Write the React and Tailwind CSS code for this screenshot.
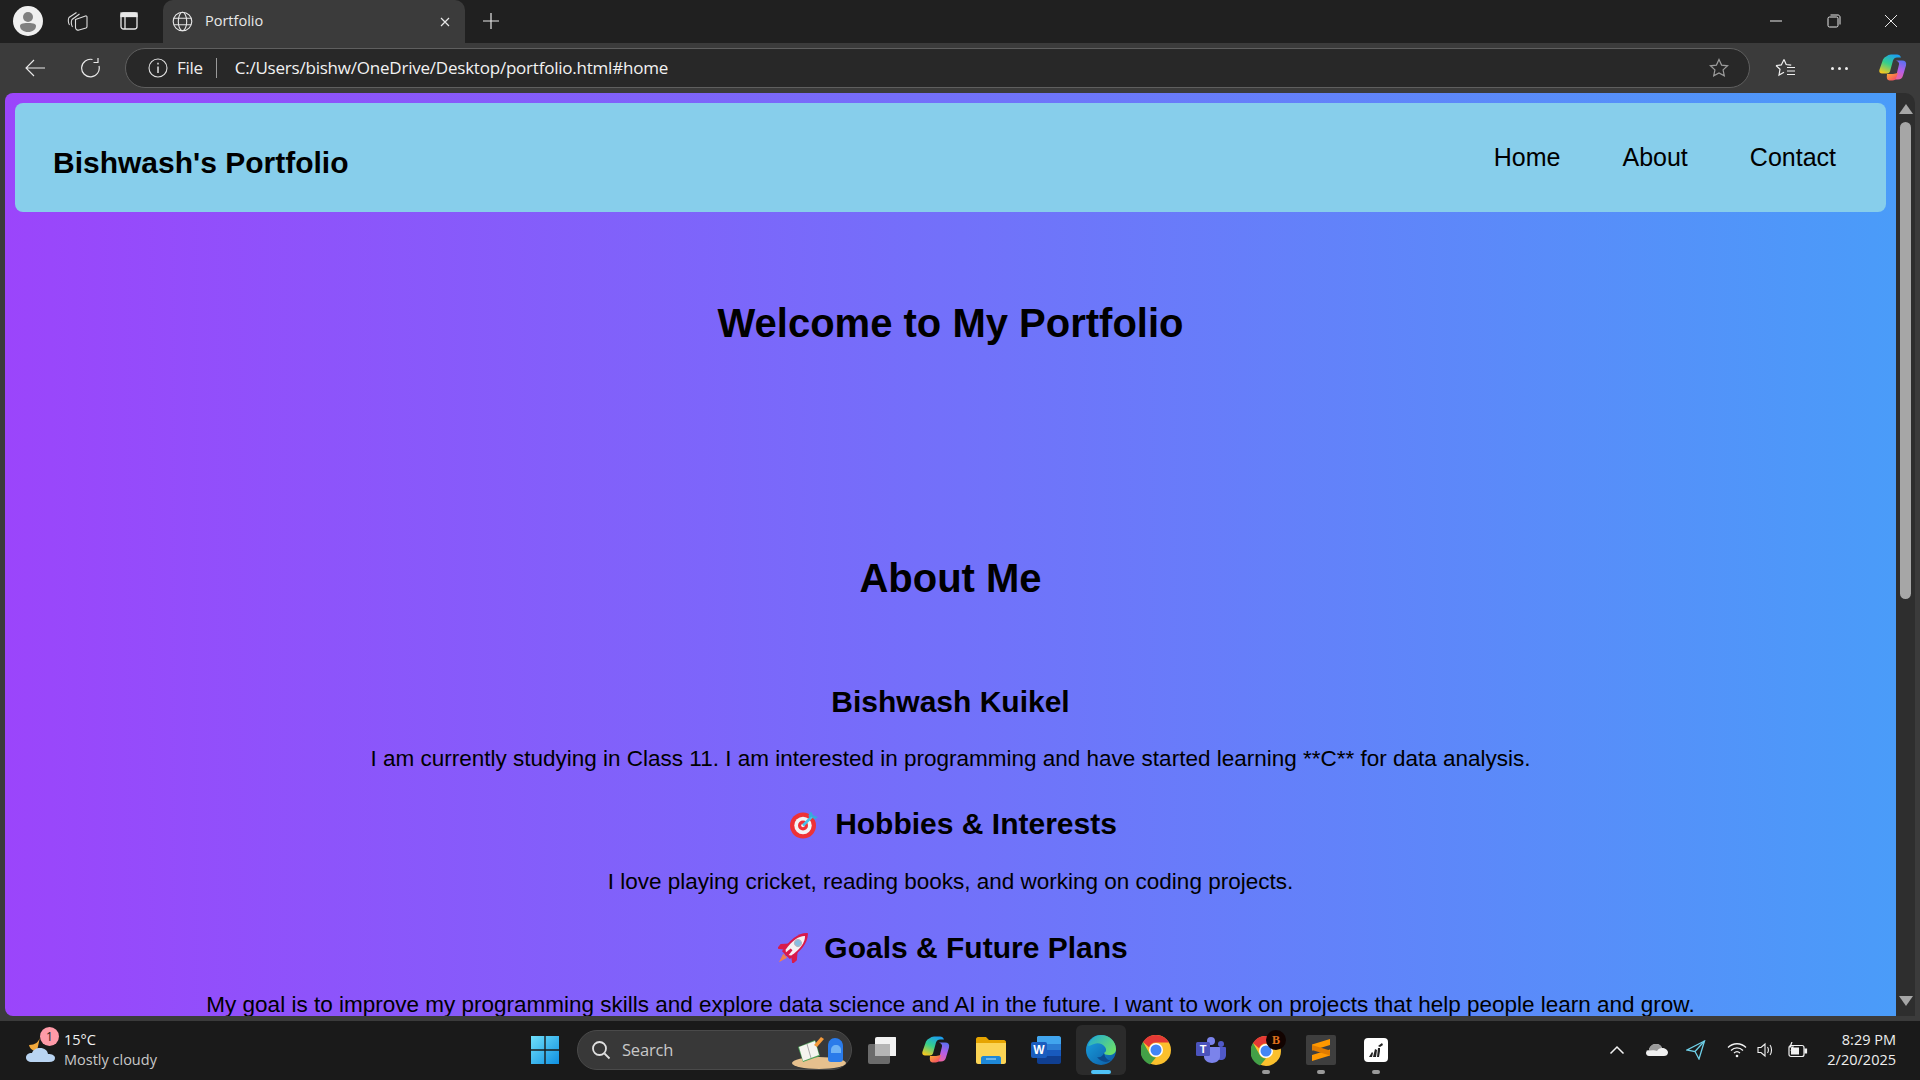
import React from "react";

const ui = { fontFamily: '"Open Sans","Noto Sans",sans-serif' };

function Copilot({ s = 28, id = "cp" }) {
  return (
    <svg width={s} height={s} viewBox="0 0 28 27">
      <defs>
        <linearGradient id={id + "a"} x1="0.7" y1="0" x2="0.2" y2="1"><stop offset="0" stopColor="#1c9ff0" /><stop offset="0.5" stopColor="#35cf8c" /><stop offset="1" stopColor="#f7c81e" /></linearGradient>
        <linearGradient id={id + "b"} x1="0.6" y1="0" x2="0.3" y2="1"><stop offset="0" stopColor="#5f6ff0" /><stop offset="0.5" stopColor="#b45ee6" /><stop offset="1" stopColor="#f0639c" /></linearGradient>
        <linearGradient id={id + "c"} x1="0" y1="0" x2="1" y2="1"><stop offset="0" stopColor="#ffb02e" /><stop offset="1" stopColor="#f03a6e" /></linearGradient>
      </defs>
      <path d="M8 1.500Q9 0 12 0h6q3 0 4 3h-4q-3 0-4 3l-3 11q-.6 2-3 2H3q-3.500 0-2.500-4L4 5q1-2.500 4-3.500z" fill={`url(#${id}a)`} />
      <path d="M17 6h6q5 0 4 5l-3 10q-1 4-5 4h-5q2 0 3-3l3-12q.5-2.500-3-4z" fill={`url(#${id}b)`} />
      <path d="M8 19.500h6l5-1-1.500 4q-1 3.500-4 3.500h-3q-3.500 0-2.500-6.500z" fill={`url(#${id}c)`} />
    </svg>
  );
}

function Globe() {
  return (
    <svg width="21" height="21" viewBox="0 0 21 21" fill="none" stroke="#e6e6e6" strokeWidth="1.100">
      <circle cx="10.500" cy="10.500" r="9.300" /><ellipse cx="10.500" cy="10.500" rx="4.200" ry="9.300" />
      <path d="M2 7.300h17M2 13.700h17" />
    </svg>
  );
}

function TopBar() {
  return (
    <div className="flex h-[43px] items-center bg-[#202020] pb-[1px] text-white">
      <div className="ml-[13px] flex h-[30px] w-[30px] items-center justify-center overflow-hidden rounded-full bg-[#f0f0f0]">
        <svg width="30" height="30" viewBox="0 0 30 30"><circle cx="15" cy="11" r="5" fill="#808080" /><path d="M7 20c0-2 2-3 8-3s8 1 8 3c0 3.500-3.500 6-8 6s-8-2.500-8-6z" fill="#808080" /></svg>
      </div>
      <svg className="ml-[24px]" width="21" height="20" viewBox="0 0 21 20" fill="none" stroke="#dcdcdc" strokeWidth="1.100">
        <path d="M2.500 14C1 12 1 8 2 6.500L9.500 1.500" /><path d="M5.500 16C4 14 4 10 5 8.500L12.500 3" />
        <path d="M8.500 8.500l10-3.500c.8-.3 1.500.2 1.500 1v9.500c0 .8-.3 1.200-1 1.500L12 19c-1.500.5-3.500-.5-3.500-2.500z" />
      </svg>
      <svg className="ml-[32px]" width="18" height="18" viewBox="0 0 18 18" fill="none" stroke="#e8e8e8" strokeWidth="1.300">
        <rect x="1" y="1" width="16" height="16" rx="2.500" /><rect x="1" y="1" width="16" height="3.500" fill="#e8e8e8" /><path d="M5 4.500V17" />
      </svg>
      <div className="ml-[25px] flex h-[43px] w-[302px] items-center self-start rounded-t-[10px] bg-[#3b3b3b] pr-[14px] pb-[1px] pl-[9px]">
        <Globe />
        <span className="ml-[12px] text-[14.5px] text-[#e8e8e8]" style={ui}>Portfolio</span>
        <svg className="mt-[1px] ml-auto" width="12" height="12" viewBox="0 0 12 12" stroke="#e8e8e8" strokeWidth="1.200"><path d="M2 2l8 8M10 2l-8 8" /></svg>
      </div>
      <svg className="ml-[17px]" width="18" height="18" viewBox="0 0 18 18" stroke="#e8e8e8" strokeWidth="1.200"><path d="M9 1v16M1 9h16" /></svg>
      <svg className="ml-auto" width="14" height="14" viewBox="0 0 14 14" stroke="#e8e8e8" strokeWidth="1"><path d="M1 7h12" /></svg>
      <svg className="ml-[44px]" width="14" height="14" viewBox="0 0 14 14" fill="none" stroke="#e8e8e8" strokeWidth="1"><rect x="1" y="3" width="10" height="10" rx="1.500" /><path d="M3.500 1h7.500c1 0 2 1 2 2v7.500" /></svg>
      <svg className="mr-[22px] ml-[43px]" width="14" height="14" viewBox="0 0 14 14" stroke="#e8e8e8" strokeWidth="1"><path d="M1 1l12 12M13 1L1 13" /></svg>
    </div>
  );
}

function Toolbar() {
  return (
    <div className="flex h-[50px] items-center bg-[#3b3b3b] text-white">
      <svg className="ml-[25px]" width="20" height="18" viewBox="0 0 20 18" fill="none" stroke="#eaeaea" strokeWidth="1.100"><path d="M20 9H1M9 1L1 9l8 8" /></svg>
      <svg className="ml-[35px]" width="20" height="20" viewBox="0 0 20 20" fill="none" stroke="#eaeaea" strokeWidth="1.200"><path d="M12.500 1.500A8.800 8.800 0 1 0 19 8" /><path d="M18 0V4.500h-4.500" /></svg>
      <div className="ml-[25px] flex h-[40px] w-[1625px] items-center rounded-[20px] border border-[#5f5f5f] bg-[#282828] pr-[20px] pl-[22px]">
        <svg width="20" height="20" viewBox="0 0 20 20" fill="none" stroke="#e0e0e0" strokeWidth="1.100"><circle cx="10" cy="10" r="9" /><path d="M10 8.500v6.500M10 4.700v1.800" strokeWidth="1.500" /></svg>
        <span className="ml-[9px] text-[17px] tracking-[-0.3px] text-[#eeeeee]" style={ui}>File</span>
        <span className="ml-[13px] h-[20px] w-px bg-[#9a9a9a]" />
        <span className="ml-[18px] text-[17px] tracking-[-0.22px] text-[#f2f2f2]" style={ui}>C:/Users/bishw/OneDrive/Desktop/portfolio.html#home</span>
        <svg className="ml-auto" width="20" height="20" viewBox="0 0 20 20" fill="none" stroke="#9c9c9c" strokeWidth="1.200"><path d="M10 1.500l2.600 5.600 6 .7-4.500 4.100 1.200 6L10 15l-5.300 2.900 1.200-6L1.400 7.800l6-.7z" /></svg>
      </div>
      <svg className="ml-[25px]" width="22" height="20" viewBox="0 0 22 20" fill="none" stroke="#f0f0f0" strokeWidth="1.200"><path d="M9 1.500l2.200 5 5 .6M1 7.500l5.300-.6L9 1.500M1 7.500l4 3.800-1 5.700 5-2.800" /><path d="M12 9.500h8M12 13h8M12 16.500h8" /></svg>
      <div className="ml-[34px] flex gap-[4px]">
        <span className="h-[3px] w-[3px] rounded-full bg-[#eeeeee]" /><span className="h-[3px] w-[3px] rounded-full bg-[#eeeeee]" /><span className="h-[3px] w-[3px] rounded-full bg-[#eeeeee]" />
      </div>
      <div className="ml-[31px]"><Copilot s={28} id="cpt" /></div>
    </div>
  );
}

function Dart() {
  return (
    <svg width="30" height="30" viewBox="0 0 30 30">
      <circle cx="14" cy="16.500" r="13" fill="#ee3236" /><circle cx="14" cy="16.500" r="8.700" fill="#f4f4f4" /><circle cx="14" cy="16.500" r="5" fill="#ee3236" /><circle cx="14" cy="16.500" r="1.800" fill="#f4f4f4" />
      <path d="M14 16.500L24 6.500" stroke="#46c3ea" strokeWidth="2.600" />
      <path d="M21 3l3.500 3.500L29 8l-3.500 2.500-3-3z M21 3l2 .5.500 3-3 3-1-3z" fill="#39a7dc" />
    </svg>
  );
}

function Rocket() {
  return (
    <svg width="30" height="30" viewBox="0 0 30 30">
      <g transform="rotate(45 15 15)">
        <path d="M12.300 26h5.400L15 35z" fill="#f4804c" />
        <path d="M9.500 14L3.500 21l.5 6 6.500-5zM20.500 14l6 7-.5 6-6.500-5z" fill="#d81b4b" />
        <path d="M15-6C22 0 23 12 20.500 25h-11C7 12 8 0 15-6z" fill="#d81b4b" />
        <path d="M15-2c4.500 4 6 13 4 23.500l-4 3-4-3C9 11 10.500 2 15-2z" fill="#f6f2f4" />
        <path d="M13.700 17h2.600l.7 7.500-2 1-2-1z" fill="#d81b4b" />
        <circle cx="15" cy="8" r="3.400" fill="#89bde0" stroke="#b5b5c0" strokeWidth="1" />
      </g>
    </svg>
  );
}

function Page() {
  return (
    <div className="flex h-[923px] bg-[#3b3b3b] pl-[5px] pr-[5px]">
      <div className="h-[923px] w-[1891px] overflow-hidden rounded-l-[8px] bg-[linear-gradient(to_right,#9b45fb,#4a9cf9)] pt-[10px] text-center text-black" style={{ fontFamily: '"Liberation Sans",Arial,sans-serif' }}>
        <div className="mx-[10px] flex h-[109px] justify-between rounded-[8px] bg-[#87ceeb] pr-[50px] pl-[38px]">
          <div className="pt-[43px] text-[30px] leading-[34px] font-bold">Bishwash's Portfolio</div>
          <div className="flex gap-[62px] pt-[39px] text-[25px] leading-[30px]">
            <span>Home</span><span>About</span><span>Contact</span>
          </div>
        </div>
        <h1 className="mt-[88px] text-[40px] leading-[46px] font-bold">Welcome to My Portfolio</h1>
        <h2 className="mt-[209px] text-[40px] leading-[46px] font-bold">About Me</h2>
        <h3 className="mt-[84px] text-[30px] leading-[34px] font-bold">Bishwash Kuikel</h3>
        <p className="mt-[27px] text-[22.5px] leading-[26px]">I am currently studying in Class 11. I am interested in programming and have started learning **C** for data analysis.</p>
        <h3 className="mt-[35px] flex items-center justify-center gap-[16px] pl-[5px] text-[30px] leading-[34px] font-bold"><Dart />Hobbies &amp; Interests</h3>
        <p className="mt-[28px] text-[22.5px] leading-[26px]">I love playing cricket, reading books, and working on coding projects.</p>
        <h3 className="mt-[36px] flex items-center justify-center gap-[16px] pl-[5px] text-[30px] leading-[34px] font-bold"><Rocket />Goals &amp; Future Plans</h3>
        <p className="mt-[27px] text-[22.5px] leading-[26px]">My goal is to improve my programming skills and explore data science and AI in the future. I want to work on projects that help people learn and grow.</p>
      </div>
      <div className="flex h-[923px] w-[19px] flex-col items-center rounded-tr-[10px] bg-[#2e2e2e] pt-[11px]">
        <div className="h-0 w-0 border-x-[7px] border-b-[10px] border-x-transparent border-b-[#a6a6a6]" />
        <div className="mt-[8px] h-[477px] w-[11px] rounded-full bg-[#a6a6a6]" />
        <div className="mt-auto mb-[10px] h-0 w-0 border-x-[7px] border-t-[10px] border-x-transparent border-t-[#a6a6a6]" />
      </div>
    </div>
  );
}

function Weather() {
  return (
    <div className="relative flex h-[59px] w-[560px] items-center pl-[25px]">
      <svg width="32" height="32" viewBox="0 0 32 32">
        <path d="M15 3c-1 5-5 8-11 8 1 4 4 6 8 6z" fill="#f2a93b" />
        <path d="M7 28c-4 0-6-2-6-4.500S3 19 7 19c1-3 4-5 8-5 4.500 0 7.500 2.500 8 6 4 0 7 1.500 7 4s-2 4-6 4z" fill="#b9d4f2" />
      </svg>
      <span className="absolute top-[7px] left-[40px] flex h-[19px] w-[19px] items-center justify-center rounded-full bg-[#ff9aa8] text-[12px] text-[#222222]" style={ui}>1</span>
      <div className="ml-[7px] flex flex-col text-[14.5px] leading-[20px]" style={ui}>
        <span className="text-[#f2f2f2]">15°C</span>
        <span className="text-[#c8c8c8]">Mostly cloudy</span>
      </div>
    </div>
  );
}

function App55({ children, bar, active }) {
  return (
    <div className={"relative flex h-[50px] w-[50px] items-center justify-center rounded-[6px] " + (active ? "bg-[#2b2b2b]" : "")}>
      {children}
      {bar && <span className={"absolute bottom-[1px] left-1/2 h-[4px] -translate-x-1/2 rounded-full " + (active ? "w-[20px] bg-[#4fc3f7]" : "w-[8px] bg-[#9a9a9a]")} />}
    </div>
  );
}

function ChromeIcon({ s = 30 }) {
  return (
    <svg width={s} height={s} viewBox="0 0 30 30">
      <circle cx="15" cy="15" r="15" fill="#fbc02d" />
      <path d="M15 0a15 15 0 0 1 13 7.500H15a7.500 7.500 0 0 0-7 4.800L2 7A15 15 0 0 1 15 0z" fill="#e53935" />
      <path d="M2 7l6.500 11.500A7.500 7.500 0 0 0 15 22.500L9 29.500A15 15 0 0 1 2 7z" fill="#43a047" />
      <circle cx="15" cy="15" r="7" fill="#fff" /><circle cx="15" cy="15" r="5.500" fill="#4285f4" />
    </svg>
  );
}

function Taskbar() {
  return (
    <div className="flex h-[59px] items-center bg-[#1a1a1a] pb-[2px] text-white">
      <Weather />
      <svg className="-ml-[29px]" width="28" height="28" viewBox="0 0 28 28">
        <defs><linearGradient id="win" x1="0" y1="0" x2="1" y2="1"><stop offset="0" stopColor="#6fe0fb" /><stop offset="1" stopColor="#0f8fe0" /></linearGradient></defs>
        <path d="M0 0h13.300v13.300H0zM14.700 0H28v13.300H14.700zM0 14.700h13.300V28H0zM14.700 14.700H28V28H14.700z" fill="url(#win)" />
      </svg>
      <div className="ml-[18px] flex h-[40px] w-[275px] items-center rounded-[20px] border border-[#4a4a4a] bg-[#383838] pl-[13px]">
        <svg width="20" height="20" viewBox="0 0 20 20" fill="none" stroke="#e0e0e0" strokeWidth="1.800"><circle cx="8.500" cy="8.500" r="6.500" /><path d="M13.500 13.500l5 5" /></svg>
        <span className="mt-[1px] ml-[11px] text-[16.500px] tracking-[-0.2px] text-[#c8c8c8]" style={ui}>Search</span>
        <svg className="mt-[2px] ml-auto" width="60" height="36" viewBox="0 0 60 36">
          <ellipse cx="28" cy="30" rx="27" ry="6" fill="#e6c08e" />
          <path d="M7 14l17-7 5 16-17 6z" fill="#4fa35a" /><path d="M8 14l16-6 4 14-16 6z" fill="#f4f4ef" /><path d="M16 11l4 14" stroke="#a9a9a9" />
          <path d="M23 12l7-8 3 2-7 8z" fill="#f49a3b" />
          <path d="M37 26V13c0-5 3-8 7-8s8 3 8 8v13c0 2-1 3-3 3H40c-2 0-3-1-3-3z" fill="#2a7bea" /><path d="M40 17c0-3 2-5 5-5s5 2 5 5v3H40z" fill="#6fb3f5" />
        </svg>
      </div>
      <div className="ml-[4px] flex items-center gap-[5px]">
        <App55>
          <svg width="30" height="30" viewBox="0 0 30 30"><rect x="2" y="9" width="22" height="20" rx="2" fill="#6b6b6b" /><rect x="9" y="2" width="22" height="19" rx="2" fill="#f2f2f2" /><rect x="9" y="9" width="15" height="12" fill="#b5b5b5" /></svg>
        </App55>
        <App55><Copilot s={28} id="cpb" /></App55>
        <App55>
          <svg width="30" height="28" viewBox="0 0 30 28"><path d="M0 3c0-1 1-2 2-2h8l3 3h15c1 0 2 1 2 2v3H0z" fill="#e6a400" /><path d="M0 7h30v19c0 1-1 2-2 2H2c-1 0-2-1-2-2z" fill="#fbd455" /><path d="M5 22c0-1 1-2 2-2h16c1 0 2 1 2 2v6H5z" fill="#1e88d8" /><path d="M10 23h10" stroke="#bfe4fb" /></svg>
        </App55>
        <App55>
          <svg width="30" height="28" viewBox="0 0 30 28"><path d="M7 0h21c1 0 2 1 2 2v6H6V1z" fill="#41a5ee" /><path d="M6 8h24v6H6z" fill="#2b7cd3" /><path d="M6 14h24v6H6z" fill="#185abd" /><path d="M6 20h24v6c0 1-1 2-2 2H8c-1 0-2-1-2-2z" fill="#103f91" /><rect y="6" width="16" height="16" rx="2" fill="#1a5dbf" /><text x="8" y="18" textAnchor="middle" fontSize="12" fontWeight="700" fill="#fff" fontFamily="Liberation Sans">W</text></svg>
        </App55>
        <App55 active bar>
          <svg width="30" height="30" viewBox="0 0 30 30">
            <defs><linearGradient id="edg" x1="0" y1="0" x2="1" y2="1"><stop offset="0" stopColor="#1aa3e0" /><stop offset="1" stopColor="#0c59a4" /></linearGradient><linearGradient id="edh" x1="0" y1="0" x2="1" y2="0.700"><stop offset="0" stopColor="#1ea7d8" /><stop offset="1" stopColor="#6be06a" /></linearGradient></defs>
            <circle cx="15" cy="15" r="15" fill="url(#edg)" />
            <path d="M2 11C4 4 9 0 15 0c8 0 15 6 15 14 0 4-3 6-7 6-3 0-5-1-5-2 2-1 3-3 1-6-2-3-7-5-11-3-3 1-5 2-6 2z" fill="url(#edh)" />
            <path d="M18 18c-1 3-4 5-7 4 3 4 9 7 14 3-3 1-6-2-7-7z" fill="#0c4a8c" />
          </svg>
        </App55>
        <App55><ChromeIcon /></App55>
        <App55>
          <svg width="30" height="26" viewBox="0 0 30 26"><circle cx="15" cy="4" r="4" fill="#7b83eb" /><circle cx="25" cy="7" r="3" fill="#5059c9" /><path d="M20 10h9c1 0 1 1 1 1v7c0 3-2 5-5 5s-5-2-5-5z" fill="#5059c9" /><path d="M8 10h15c1 0 1 1 1 1v9c0 3-4 6-8 6s-8-3-8-6z" fill="#7b83eb" /><rect y="5" width="14" height="14" rx="1.500" fill="#4b53bc" /><text x="7" y="16" textAnchor="middle" fontSize="11" fontWeight="700" fill="#fff" fontFamily="Liberation Sans">T</text></svg>
        </App55>
        <App55 bar>
          <div className="relative mt-[2px] h-[30px] w-[30px]">
            <ChromeIcon />
            <span className="absolute -top-[6px] -right-[5px] flex h-[20px] w-[20px] items-center justify-center rounded-full bg-[#120300] text-[12px] font-bold text-[#e0721c]" style={{ fontFamily: '"Liberation Serif",serif' }}>B</span>
          </div>
        </App55>
        <App55 bar>
          <div className="flex h-[30px] w-[30px] items-center justify-center rounded-[2px] bg-[#3e3e3e]">
            <svg width="20" height="24" viewBox="0 0 20 24" fill="#ff9800"><path d="M19 1v6L1 12.500v-6zM19 11.500v6L1 23v-6z" /><path d="M1 7l18 5.500v5L1 12z" fill="#e07b00" /></svg>
          </div>
        </App55>
        <App55 bar>
          <div className="flex h-[24px] w-[24px] items-center justify-center rounded-[4px] bg-white">
            <svg width="16" height="16" viewBox="0 0 16 16" fill="#222222"><path d="M1 15l3-5 1 1-1 4zM5 15l2-8 2 1-1 7zM9 15l1-9 2 0v3l-1 6zM10 4l4-3 1 2-3 2z" /></svg>
          </div>
        </App55>
      </div>
      <div className="ml-auto flex items-center pr-[24px]">
        <svg width="16" height="10" viewBox="0 0 16 10" fill="none" stroke="#f2f2f2" strokeWidth="1.500"><path d="M1.500 8.500L8 2l6.500 6.500" /></svg>
        <svg className="ml-[21px]" width="22" height="14" viewBox="0 0 22 14"><path d="M3 13c-2 0-3-1.500-3-3s1-3 3-3c.5-3 3-6 7-6 3 0 5 1.500 6 4 3 0 6 2 6 4.500S20 13 18 13z" fill="#f0f0f0" /><path d="M0 8c1-1 2-1 3-1 .5-3 3-6 7-6 3 0 5 1.500 6 4-2 0-4 1-5 3-2-1-6-1-11 0z" fill="#9a9a9a" /></svg>
        <svg className="ml-[18px]" width="20" height="20" viewBox="0 0 20 20" fill="none" stroke="#6fd0e8" strokeWidth="1.300"><path d="M18.500 1L1 10l8 1.500L13 19z" /><path d="M9 11.500L18.500 1" /></svg>
        <svg className="ml-[21px]" width="20" height="16" viewBox="0 0 20 16" fill="none" stroke="#f2f2f2" strokeWidth="1.300"><path d="M1 5.500c5-5 13-5 18 0M4 8.500c3.500-3.500 8.500-3.500 12 0M7 11c2-1.800 4-1.800 6 0" /><circle cx="10" cy="14" r="1.300" fill="#f2f2f2" stroke="none" /></svg>
        <svg className="ml-[10px]" width="18" height="16" viewBox="0 0 18 16" fill="none" stroke="#f2f2f2" strokeWidth="1.100"><path d="M1 5.500h3L8 2v12l-4-3.500H1z" /><path d="M10.500 5c1.200 1.500 1.200 4.500 0 6M13 3c2 2.500 2 7.500 0 10" /></svg>
        <svg className="ml-[13px]" width="20" height="16" viewBox="0 0 20 16" fill="none" stroke="#f2f2f2" strokeWidth="1.200"><rect x="1" y="3.500" width="15" height="11" rx="2" /><rect x="3" y="5.500" width="8" height="7" fill="#f2f2f2" stroke="none" /><path d="M17 7v4h1.500V7z" fill="#f2f2f2" /><path d="M4 0L2 5h3L3 9" /></svg>
        <div className="ml-[19px] flex flex-col items-end text-[14.5px] leading-[20px] text-[#eeeeee]" style={ui}>
          <span>8:29 PM</span><span>2/20/2025</span>
        </div>
      </div>
    </div>
  );
}

export default function App() {
  return (
    <div className="h-[1080px] w-[1920px] overflow-hidden bg-[#3b3b3b]">
      <TopBar />
      <Toolbar />
      <Page />
      <div className="h-[5px] bg-[#3b3b3b]" />
      <Taskbar />
    </div>
  );
}
